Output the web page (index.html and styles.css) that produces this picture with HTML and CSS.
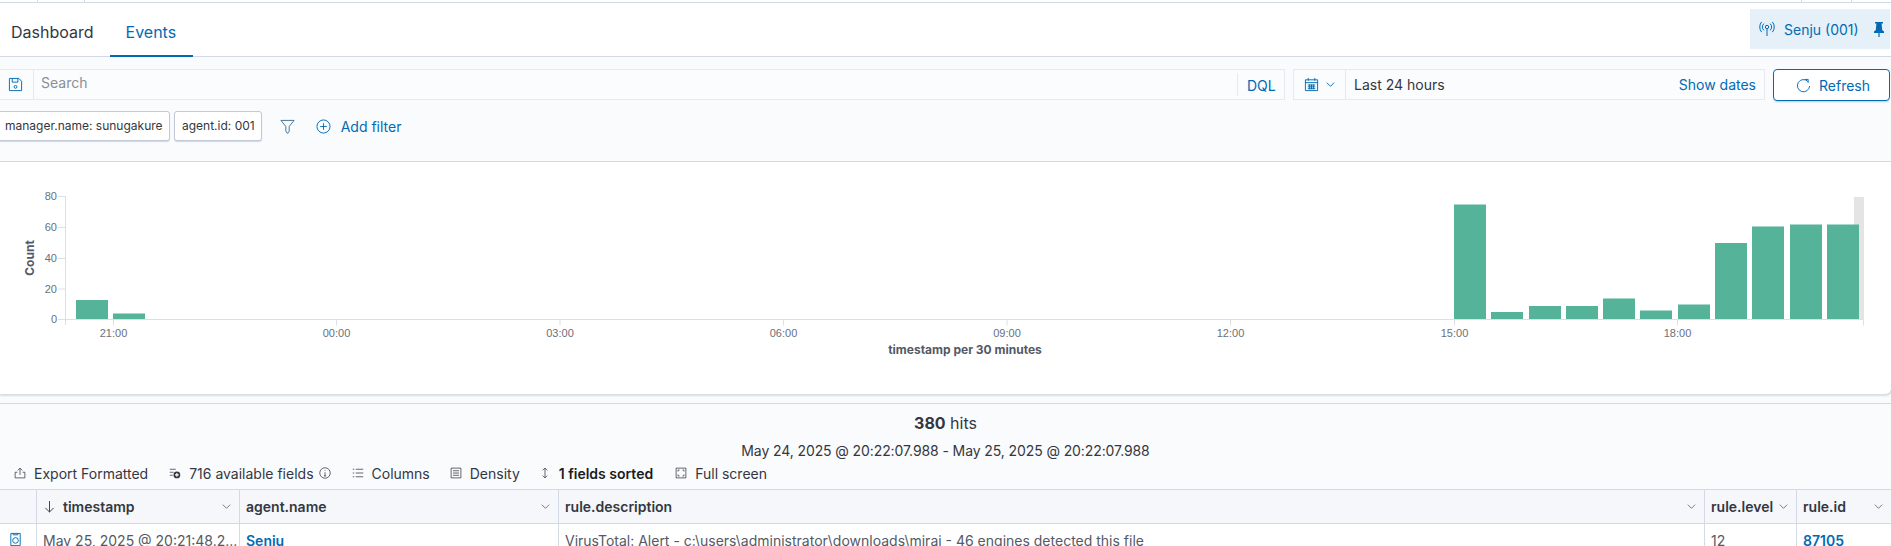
FILE: index.html
```html
<!DOCTYPE html>
<html>

<head>
    <meta charset='utf-8'>
    <title>Events</title>
    <link rel="stylesheet" href="styles.css">
</head>

<body>
    <div class="topStrip">
        <span class="stripTick stripTickA"></span>
        <span class="stripTick stripTickB"></span>
        <span class="stripTick stripTickC"></span>
        <span class="stripTick stripTickD"></span>
    </div>

    <div class="tabBar">
        <div class="tabs">
            <a class="tab">Dashboard</a>
            <a class="tab tabActive">Events</a>
        </div>
        <div class="agentBadge">
            <svg class="icon" viewBox="0 0 16 16"><circle cx="8" cy="6" r="1.7"/><path d="M8 7.7V15M4.900 2.600a5 5 0 0 0 0 6.800M11.100 2.600a5 5 0 0 1 0 6.800M2.600 .9a8 8 0 0 0 0 10.200M13.400 .9a8 8 0 0 1 0 10.200"/></svg>
            <span class="agentName">Senju (001)</span>
            <svg class="icon pinIcon" viewBox="0 0 16 16"><path class="solid" d="M4 1h8v1.600h-1.400l.6 6.400 1.800 1.600V12H8.600v4H7.400v-4H3v-1.400L4.800 9l.6-6.400H4z"/></svg>
        </div>
    </div>

    <div class="searchArea">
        <div class="queryRow">
            <div class="searchBox">
                <div class="saveBtn">
                    <svg class="icon" viewBox="0 0 16 16"><path d="M1.500 1.500h10l3 3v10h-13zM4.500 1.500v4h6v-4"/><circle cx="8" cy="10.500" r="1.500"/></svg>
                </div>
                <div class="searchInput">Search</div>
                <div class="dqlBtn">DQL</div>
            </div>
            <div class="dateBox">
                <div class="datePrepend">
                    <svg class="icon" viewBox="0 0 16 16"><path d="M1.500 3h13v11.500h-13zM1.500 6h13M4.500 1v3M11.500 1v3M4 8.500h8M4 10.500h8M4 12.500h8M6 8v5M8 8v5M10 8v5"/></svg>
                    <svg class="chevron" viewBox="0 0 12 12"><path d="M2 4l4 4 4-4"/></svg>
                </div>
                <div class="dateText">Last 24 hours</div>
                <div class="showDates">Show dates</div>
            </div>
            <div class="refreshBtn">
                <svg class="icon" viewBox="0 0 16 16"><path d="M12.800 3.800A6.500 6.500 0 1 0 14.500 8.500M9.500 1.500h3.500v3.500"/></svg>
                <span>Refresh</span>
            </div>
        </div>
        <div class="filterRow">
            <div class="chip chipCut">manager.name: sunugakure</div>
            <div class="chip">agent.id: 001</div>
            <svg class="icon filterIcon" viewBox="0 0 16 16"><path d="M1 1.500h14L9.800 8v5l-1.300 2h-1L6.200 13V8z"/></svg>
            <svg class="icon addIcon" viewBox="0 0 16 16"><circle cx="8" cy="8" r="7"/><path d="M8 4.500v7M4.500 8h7"/></svg>
            <span class="addFilter">Add filter</span>
        </div>
    </div>

    <div class="chartPanel">
        <svg class="chart" viewBox="0 162 1891 232">
            <rect class="brush" x="1854" y="197" width="10" height="122"/>
            <g class="bars">
                <rect x="76" y="300" width="32" height="19"/>
                <rect x="113" y="313.500" width="32" height="5.500"/>
                <rect x="1454" y="204.500" width="32" height="114.500"/>
                <rect x="1491" y="312" width="32" height="7"/>
                <rect x="1529" y="306" width="32" height="13"/>
                <rect x="1566" y="306" width="32" height="13"/>
                <rect x="1603" y="298.500" width="32" height="20.500"/>
                <rect x="1640" y="310.500" width="32" height="8.500"/>
                <rect x="1678" y="304.500" width="32" height="14.500"/>
                <rect x="1715" y="243" width="32" height="76"/>
                <rect x="1752" y="226.500" width="32" height="92.500"/>
                <rect x="1790" y="224.500" width="32" height="94.500"/>
                <rect x="1827" y="224.500" width="32" height="94.500"/>
            </g>
            <path class="axis" d="M65.500 196V325M58 196.500h7M58 227.500h7M58 258.500h7M58 289h7M58 319.500H1863.500M113.500 319.500v6M336.500 319.500v6M560 319.500v6M783.500 319.500v6M1007 319.500v6M1230.500 319.500v6M1454.500 319.500v6M1677.500 319.500v6M1863.500 319.500v6"/>
            <g class="yLabels">
                <text x="57" y="200">80</text>
                <text x="57" y="231">60</text>
                <text x="57" y="262">40</text>
                <text x="57" y="293">20</text>
                <text x="57" y="323">0</text>
            </g>
            <g class="xLabels">
                <text x="113.500" y="337">21:00</text>
                <text x="336.500" y="337">00:00</text>
                <text x="560" y="337">03:00</text>
                <text x="783.500" y="337">06:00</text>
                <text x="1007" y="337">09:00</text>
                <text x="1230.500" y="337">12:00</text>
                <text x="1454.500" y="337">15:00</text>
                <text x="1677.500" y="337">18:00</text>
            </g>
            <text class="axisTitle" x="965" y="354">timestamp per 30 minutes</text>
            <text class="axisTitle" transform="translate(33.500 258) rotate(-90)">Count</text>
        </svg>
    </div>

    <div class="discover">
        <div class="hits"><b>380</b> hits</div>
        <div class="range">May 24, 2025 @ 20:22:07.988 - May 25, 2025 @ 20:22:07.988</div>
        <div class="gridTools">
            <span class="tool">
                <svg class="toolIcon" viewBox="0 0 16 16"><path d="M4.500 7H1.500v7.500h13V7h-3M8 10.500V1.500M5 4.500l3-3 3 3"/></svg>
                Export Formatted
            </span>
            <span class="tool toolFields">
                <svg class="toolIcon" viewBox="0 0 16 16"><path d="M1 3h8M1 7h5M1 11h4"/><circle class="solid" cx="10.500" cy="10.500" r="4.500"/><path class="plus" d="M10.500 8v5M8 10.500h5"/></svg>
                716 available fields
                <svg class="toolIcon infoIcon" viewBox="0 0 16 16"><circle cx="8" cy="8" r="7"/><path d="M8 7v5M6.500 12h3M8 4v1"/></svg>
            </span>
            <span class="tool toolColumns">
                <svg class="toolIcon" viewBox="0 0 16 16"><path d="M1 3h2M5 3h10M1 8h2M5 8h10M1 13h2M5 13h10"/></svg>
                Columns
            </span>
            <span class="tool toolDensity">
                <svg class="toolIcon" viewBox="0 0 16 16"><path d="M1.500 1.500h13v13h-13zM4 5h8M4 8h8M4 11h8"/></svg>
                Density
            </span>
            <span class="tool toolSorted">
                <svg class="toolIcon sortIcon" viewBox="0 0 10 16"><path d="M5 1.500v13M2 4.500l3-3 3 3M2 11.500l3 3 3-3"/></svg>
                <b>1 fields sorted</b>
            </span>
            <span class="tool toolFull">
                <svg class="toolIcon" viewBox="0 0 16 16"><path d="M1.500 1.500h13v13h-13zM4 6V4h2M10 4h2v2M12 10v2h-2M6 12H4v-2"/></svg>
                Full screen
            </span>
        </div>
        <div class="gridRow gridHead">
            <div class="cell"></div>
            <div class="cell">
                <svg class="sortArrow" viewBox="0 0 12 14"><path d="M6 1v12M1.500 8.500L6 13l4.500-4.500"/></svg>
                <span>timestamp</span>
                <svg class="chevron" viewBox="0 0 12 12"><path d="M2 4l4 4 4-4"/></svg>
            </div>
            <div class="cell"><span>agent.name</span><svg class="chevron" viewBox="0 0 12 12"><path d="M2 4l4 4 4-4"/></svg></div>
            <div class="cell"><span>rule.description</span><svg class="chevron" viewBox="0 0 12 12"><path d="M2 4l4 4 4-4"/></svg></div>
            <div class="cell"><span>rule.level</span><svg class="chevron" viewBox="0 0 12 12"><path d="M2 4l4 4 4-4"/></svg></div>
            <div class="cell"><span>rule.id</span><svg class="chevron" viewBox="0 0 12 12"><path d="M2 4l4 4 4-4"/></svg></div>
        </div>
        <div class="gridRow gridBody">
            <div class="cell expandCell">
                <svg class="icon" viewBox="0 0 16 16"><path d="M3 1.500h10v13H3zM5.500 1.500v1.500h5V1.500"/><circle cx="8" cy="9" r="3"/></svg>
            </div>
            <div class="cell">May 25, 2025 @ 20:21:48.2...</div>
            <div class="cell"><a class="link">Senju</a></div>
            <div class="cell">VirusTotal: Alert - c:\users\administrator\downloads\mirai - 46 engines detected this file</div>
            <div class="cell">12</div>
            <div class="cell"><a class="link">87105</a></div>
        </div>
    </div>
</body>

</html>
```
FILE: styles.css
```css
html, body {
    margin: 0;
    height: 546px;
    overflow: hidden;
}

body {
    background-color: #fafbfd;
    color: #343741;
    font-family: Inter, "Liberation Sans", sans-serif;
    font-size: 14px;
}

svg {
    flex: none;
    display: block;
}

.icon, .toolIcon, .chevron, .sortArrow {
    fill: none;
    stroke: currentColor;
}

.icon {
    width: 15px;
    height: 15px;
    color: #006bb4;
}

.solid {
    fill: currentColor;
    stroke: none;
}

.plus {
    stroke: #fff;
    stroke-width: 1.5;
}

.chevron {
    width: 11px;
    height: 11px;
    color: #69707d;
}

/* top strip */
.topStrip {
    position: relative;
    height: 2px;
    background-color: #fff;
    border-bottom: 1px solid #d3dae6;
}

.stripTick {
    position: absolute;
    top: 0;
    width: 1px;
    height: 2px;
    background-color: #d3dae6;
}

.stripTickA { left: 37px; }
.stripTickB { left: 84px; }
.stripTickC { left: 1801px; }
.stripTickD { left: 1851px; }

/* tabs */
.tabBar {
    display: flex;
    justify-content: space-between;
    height: 53px;
    background-color: #fff;
    border-bottom: 1px solid #d3dae6;
}

.tabs {
    display: flex;
}

.tab {
    display: block;
    height: 52px;
    padding: 0 16px 0 11px;
    line-height: 59px;
    font-size: 16px;
}

.tabActive {
    color: #006bb4;
    width: 83px;
    box-sizing: border-box;
    padding: 0 0 0 16px;
    height: 54px;
    border-bottom: 2px solid #006bb4;
}

.agentBadge {
    display: flex;
    align-items: center;
    box-sizing: border-box;
    width: 140px;
    height: 40px;
    margin: 6px 1px 0 0;
    padding-left: 9px;
    background-color: #e6f0f8;
    color: #006bb4;
    white-space: nowrap;
}

.agentBadge .icon {
    width: 16px;
    height: 16px;
}

.agentName {
    margin-left: 9px;
}

.pinIcon {
    margin-left: 12px;
}

/* search and filters */
.searchArea {
    box-sizing: border-box;
    height: 105px;
    padding-top: 12px;
    border-bottom: 1px solid #d3dae6;
}

.queryRow {
    display: flex;
    height: 31px;
}

.searchBox {
    display: flex;
    box-sizing: border-box;
    width: 1285px;
    height: 31px;
    border: 1px solid #e6e9f0;
    border-left: 0;
    background-color: #fbfcfd;
}

.saveBtn {
    display: flex;
    align-items: center;
    box-sizing: border-box;
    width: 34px;
    padding-left: 8px;
    border-right: 1px solid #e6e9f0;
}

.searchInput {
    flex: 1;
    padding: 4px 7px;
    color: #8a8f99;
}

.dqlBtn {
    box-sizing: border-box;
    width: 47px;
    margin: 3px 0;
    padding: 4px 0 0 9px;
    border-left: 1px solid #e6e9f0;
    color: #006bb4;
}

.dateBox {
    display: flex;
    align-items: center;
    box-sizing: border-box;
    width: 472px;
    height: 31px;
    margin-left: 8px;
    border: 1px solid #e6e9f0;
    background-color: #fbfcfd;
}

.datePrepend {
    display: flex;
    align-items: center;
    gap: 6px;
    box-sizing: border-box;
    width: 52px;
    height: 100%;
    padding-left: 10px;
    border-right: 1px solid #e6e9f0;
}

.datePrepend .chevron {
    color: #006bb4;
}

.dateText {
    flex: 1;
    padding-left: 8px;
}

.showDates {
    padding-right: 8px;
    color: #006bb4;
}

.refreshBtn {
    display: flex;
    align-items: center;
    gap: 8px;
    box-sizing: border-box;
    width: 117px;
    height: 32px;
    margin-left: 8px;
    padding-left: 22px;
    border: 1px solid #006bb4;
    border-radius: 4px;
    background-color: #fff;
    box-shadow: 0 2px 2px -1px rgba(0, 107, 180, 0.3);
    color: #006bb4;
}

.filterRow {
    display: flex;
    align-items: center;
    height: 30px;
    margin-top: 11px;
    font-size: 12px;
}

.chip {
    box-sizing: border-box;
    height: 30px;
    padding: 0 6px 0 7px;
    line-height: 27px;
    border: 1px solid #c2c9d6;
    border-radius: 3px;
    background-color: #fff;
    box-shadow: 0 1px 1px rgba(152, 162, 179, 0.4);
    white-space: nowrap;
}

.chipCut {
    width: 175px;
    margin-left: -5px;
    margin-right: 4px;
    padding-left: 9px;
}

.filterIcon {
    margin-left: 18px;
    color: #3f6f94;
}

.addIcon {
    margin-left: 21px;
}

.addFilter {
    margin-left: 10px;
    color: #006bb4;
    font-size: 14px;
}

/* chart */
.chartPanel {
    height: 232px;
    background-color: #fff;
    border-radius: 0 0 5px 0;
    box-shadow: 0 2px 2px rgba(152, 162, 179, 0.35), 1px 0 0 #d3dae6;
}

.chart {
    width: 1891px;
    height: 232px;
    font-family: "Liberation Sans", sans-serif;
    font-size: 11px;
}

.bars rect {
    fill: #54b399;
}

.brush {
    fill: #e4e4e4;
}

.axis {
    fill: none;
    stroke: #dcdfe3;
    stroke-width: 1;
}

.yLabels text {
    fill: #69707d;
    text-anchor: end;
}

.xLabels text {
    fill: #69707d;
    text-anchor: middle;
}

.axisTitle {
    fill: #535966;
    font-family: Inter, sans-serif;
    font-size: 12px;
    font-weight: bold;
    text-anchor: middle;
}

/* results */
.discover {
    margin-top: 9px;
    border-top: 1px solid #d3dae6;
}

.hits {
    height: 24px;
    margin-top: 7px;
    line-height: 24px;
    text-align: center;
    font-size: 16px;
}

.hits b {
    font-weight: 700;
}

.range {
    height: 20px;
    margin-top: 6px;
    line-height: 20px;
    text-align: center;
    letter-spacing: -0.1px;
}

.gridTools {
    display: flex;
    align-items: center;
    height: 20px;
    padding: 2px 0 6px 14px;
    box-sizing: content-box;
}

.tool {
    display: flex;
    align-items: center;
    gap: 8px;
    white-space: nowrap;
}

.toolIcon {
    width: 12px;
    height: 12px;
}

.toolFields { margin-left: 21px; }
.toolColumns { margin-left: 21px; }
.toolDensity { margin-left: 20px; }
.toolSorted { margin-left: 21px; }
.toolFull { margin-left: 22px; }

.infoIcon {
    width: 12px;
    height: 12px;
    margin-left: -3px;
}

.sortIcon {
    width: 8px;
    margin-right: 2px;
}

.toolSorted b {
    font-weight: 600;
    color: #1a1c21;
}

.gridRow {
    display: grid;
    grid-template-columns: 37px 203px 319px 1146px 92px 94px;
}

.gridHead {
    box-sizing: border-box;
    height: 35px;
    border-top: 1px solid #d3dae6;
    border-bottom: 1px solid #d3dae6;
    background-color: #f5f7fa;
    font-weight: 600;
}

.gridHead .cell {
    display: flex;
    align-items: center;
    box-sizing: border-box;
    padding: 0 7px 0 6px;
    border-right: 1px solid #d3dae6;
}

.gridHead .cell:last-child {
    border-right: 0;
}

.gridHead .chevron {
    margin-left: auto;
}

.sortArrow {
    width: 11px;
    height: 13px;
    margin: 0 8px 0 1px;
    color: #343741;
}

.gridBody {
    height: 23px;
    background-color: #fff;
}

.gridBody .cell {
    box-sizing: border-box;
    padding: 8px 7px 0 6px;
    border-right: 1px solid #d3dae6;
    white-space: nowrap;
    color: #535966;
}

.gridBody .cell:last-child {
    border-right: 0;
}

.expandCell {
    padding-left: 8px !important;
}

.link {
    color: #006bb4;
    font-weight: 600;
}
```
